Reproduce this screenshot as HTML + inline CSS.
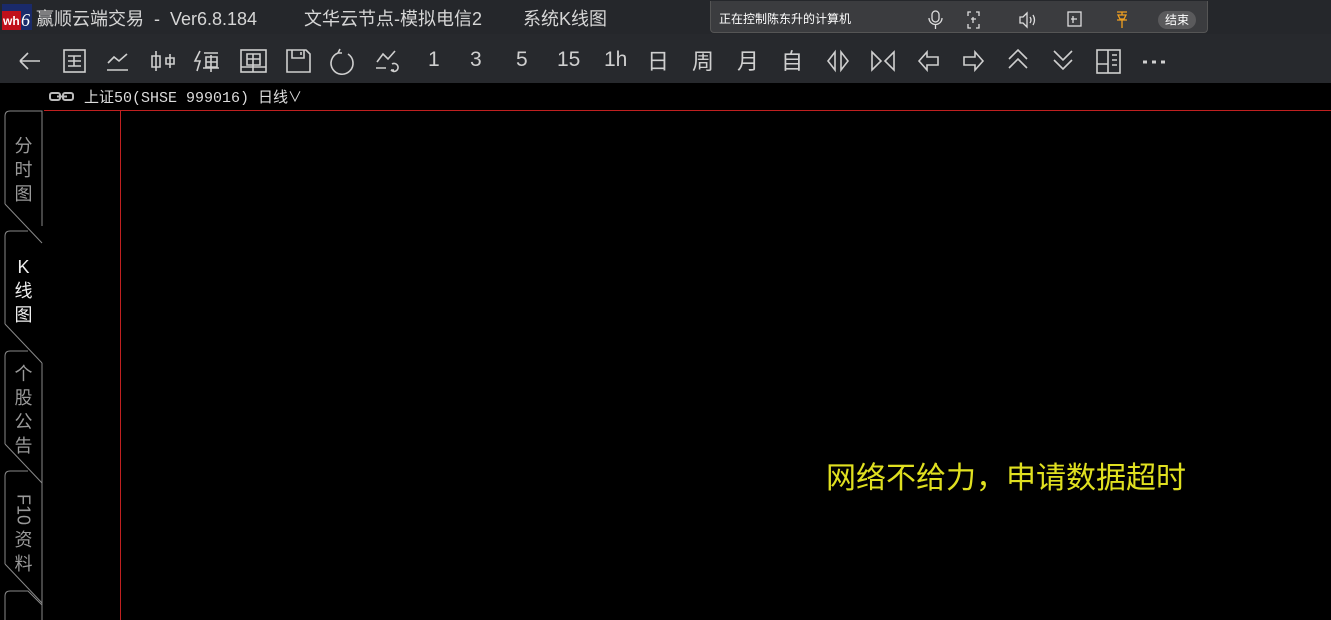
<!DOCTYPE html>
<html><head><meta charset="utf-8"><style>
*{margin:0;padding:0;box-sizing:border-box}
body{width:1331px;height:620px;background:#000;overflow:hidden;position:relative;font-family:"Liberation Sans","Noto Sans CJK SC",sans-serif}
#title{position:absolute;left:0;top:0;width:1331px;height:34px;background:#25272b}
#tool{position:absolute;left:0;top:34px;width:1331px;height:49px;background:#27292d}
.t{position:absolute;top:5px;color:#d6d6d6;font-size:18px;white-space:nowrap}
#remote{position:absolute;left:710px;top:1px;width:498px;height:32px;background:#3b3c3f;border:1px solid #555;border-top:none;border-radius:0 0 4px 4px}
#remote .lab{position:absolute;left:8px;top:9px;font-size:12px;color:#fff}
#end{position:absolute;left:447px;top:10px;width:38px;height:18px;border-radius:9px;background:#5a5a5c;color:#fff;font-size:12px;text-align:center;line-height:18px}
#msg{position:absolute;left:826px;top:461px;color:#e0e020;font-size:30px;line-height:36px;white-space:nowrap}
#sym{position:absolute;left:84px;top:86px;color:#ddd;font-size:15px;font-family:"Liberation Mono","Noto Sans CJK SC",monospace;white-space:nowrap}
.tab{position:absolute;left:5px;width:37px;text-align:center;font-size:18px;line-height:24px;color:#999}
</style></head><body>
<div id="title">
 <svg style="position:absolute;left:2px;top:4px" width="30" height="26"><rect width="30" height="26" fill="#1a2a6a"/><rect x="0" y="7" width="19" height="19" fill="#c0101a"/><text x="1" y="21" font-size="12" font-weight="bold" fill="#fff" font-family="Liberation Sans">wh</text><text x="19" y="22" font-size="18" fill="#fff" font-style="italic" font-family="Liberation Serif">6</text></svg>
 <div class="t" style="left:36px">赢顺云端交易 &nbsp;- &nbsp;Ver6.8.184</div>
 <div class="t" style="left:304px">文华云节点-模拟电信2</div>
 <div class="t" style="left:523px">系统K线图</div>
 <div id="remote"><div class="lab">正在控制陈东升的计算机</div>
  <svg style="position:absolute;left:200px;top:8px" width="290" height="22" fill="none" stroke="#ddd" stroke-width="1.3">
   <rect x="21" y="2" width="7" height="11" rx="3.5"/><path d="M18 9a6.5 6.5 0 0 0 13 0M24.5 16v4"/>
   <path d="M60 3h-3v4M65 3h3v4M60 19h-3v-4M65 19h3v-4M60 10h5M62 8v6"/>
   <path d="M109 8h3l4-4v14l-4-4h-3zM119 8q2 3 0 6M122 6q3 5 0 10"/>
   <rect x="157" y="3" width="13" height="14"/><path d="M160 10h6M162 7v7"/>
   <path d="M206 3h10M211 3v3M207 6h8l-2 4h-4zM206 11h10M211 11v8" stroke="#f0a020"/>
  </svg>
  <div id="end">结束</div>
 </div>
</div>
<div id="tool">
<svg width="1331" height="49" fill="none" stroke="#cfcfcf" stroke-width="1.6">
 <path d="M20 27h20M20 27l8-8M20 27l8 8"/>
 <rect x="64" y="16" width="21" height="22"/><path d="M68 22h13M68 27h13M68 32h13M74 22v10"/>
 <path d="M108 29l6-6 5 4 8-7M107 36h21"/>
 <path d="M156 17v20M152 22h8v11h-8zM170 20v14M166 24h8v6h-8z"/>
 <path d="M200 17l-5 10h5l-3 10M204 19h14M206 23h11v10h-11zM206 28h11M211 21v17M203 34h16"/>
 <rect x="241" y="16" width="25" height="22"/><path d="M247 20h13v11h-13zM247 25h13M253 20v18M241 33h25"/>
 <path d="M287 16h19l4 4v18h-23zM292 16v8h12v-8M301 18v3"/>
 <path d="M338 19a11 11 0 1 0 10 1M338 19l4 0M338 19l2 -4"/>
 <path d="M377 28l6-8 5 5 7-8M376 34h10M392 30a4 4 0 1 1 -1 6M391 36h3"/>
</svg>
<div style="position:absolute;top:14px;left:0;color:#cfcfcf;font-size:21px;font-weight:300">
 <span style="position:absolute;left:428px">1</span>
 <span style="position:absolute;left:470px">3</span>
 <span style="position:absolute;left:516px">5</span>
 <span style="position:absolute;left:557px">15</span>
 <span style="position:absolute;left:604px">1h</span>
</div>
<div style="position:absolute;top:10px;left:0;color:#cfcfcf;font-size:22px">
 <span style="position:absolute;left:647px">日</span>
 <span style="position:absolute;left:692px">周</span>
 <span style="position:absolute;left:737px">月</span>
 <span style="position:absolute;left:781px">自</span>
</div>
<svg style="position:absolute;left:0;top:0" width="1331" height="49" fill="none" stroke="#cfcfcf" stroke-width="1.6">
 <path d="M835 18l-7 9 7 9zM841 18l7 9-7 9z"/>
 <path d="M872 18l9 9-9 9zM894 18l-9 9 9 9z"/>
 <path d="M919 27l8-9v5h11v8h-11v5z"/>
 <path d="M983 27l-8-9v5h-11v8h11v5z"/>
 <path d="M1009 25l9-9 9 9M1009 34l9-9 9 9"/>
 <path d="M1054 17l9 9 9-9M1054 26l9 9 9-9"/>
 <rect x="1097" y="16" width="23" height="23"/><path d="M1108 16v23M1097 30h11M1112 21h5M1112 26h5M1112 31h5"/>
 <path d="M1143 28h4M1152 28h4M1161 28h4" stroke-width="3"/>
</svg>
</div>
<svg style="position:absolute;left:49px;top:91px" width="26" height="12" fill="none" stroke="#bbb" stroke-width="2"><rect x="1" y="2" width="10" height="7" rx="2"/><rect x="14" y="2" width="10" height="7" rx="2"/><path d="M8 5.5h10"/></svg>
<div id="sym">上证50(SHSE 999016)  日线<span style="font-size:14px">∨</span></div>
<div style="position:absolute;left:44px;top:110px;width:1287px;height:1px;background:#c02020"></div>
<div style="position:absolute;left:120px;top:110px;width:1px;height:510px;background:#c02020"></div>
<svg style="position:absolute;left:0;top:0" width="50" height="620" fill="none" stroke="#888" stroke-width="1">
 <path d="M5 204V116q0-5 5-5h32v115"/><path d="M5 204l37 39"/>
 <path d="M5 324V236q0-5 5-5h18"/><path d="M5 324l37 39"/>
 <path d="M5 444V356q0-5 5-5h18"/><path d="M42 363v120"/><path d="M5 444l37 39"/>
 <path d="M5 564V476q0-5 5-5h18"/><path d="M42 483v120"/><path d="M5 564l37 39"/>
 <path d="M5 620V596q0-5 5-5h18l14 14"/><path d="M42 603v20"/>
</svg>
<div class="tab" style="top:134px">分<br>时<br>图</div>
<div class="tab" style="top:255px;color:#eee">K<br>线<br>图</div>
<div class="tab" style="top:362px">个<br>股<br>公<br>告</div>
<div class="tab" style="top:492px"><div style="writing-mode:vertical-rl;margin:0 auto;height:36px;line-height:20px;font-size:18px">F10</div>资<br>料</div>
<div id="msg">网络不给力，申请数据超时</div>
</body></html>
